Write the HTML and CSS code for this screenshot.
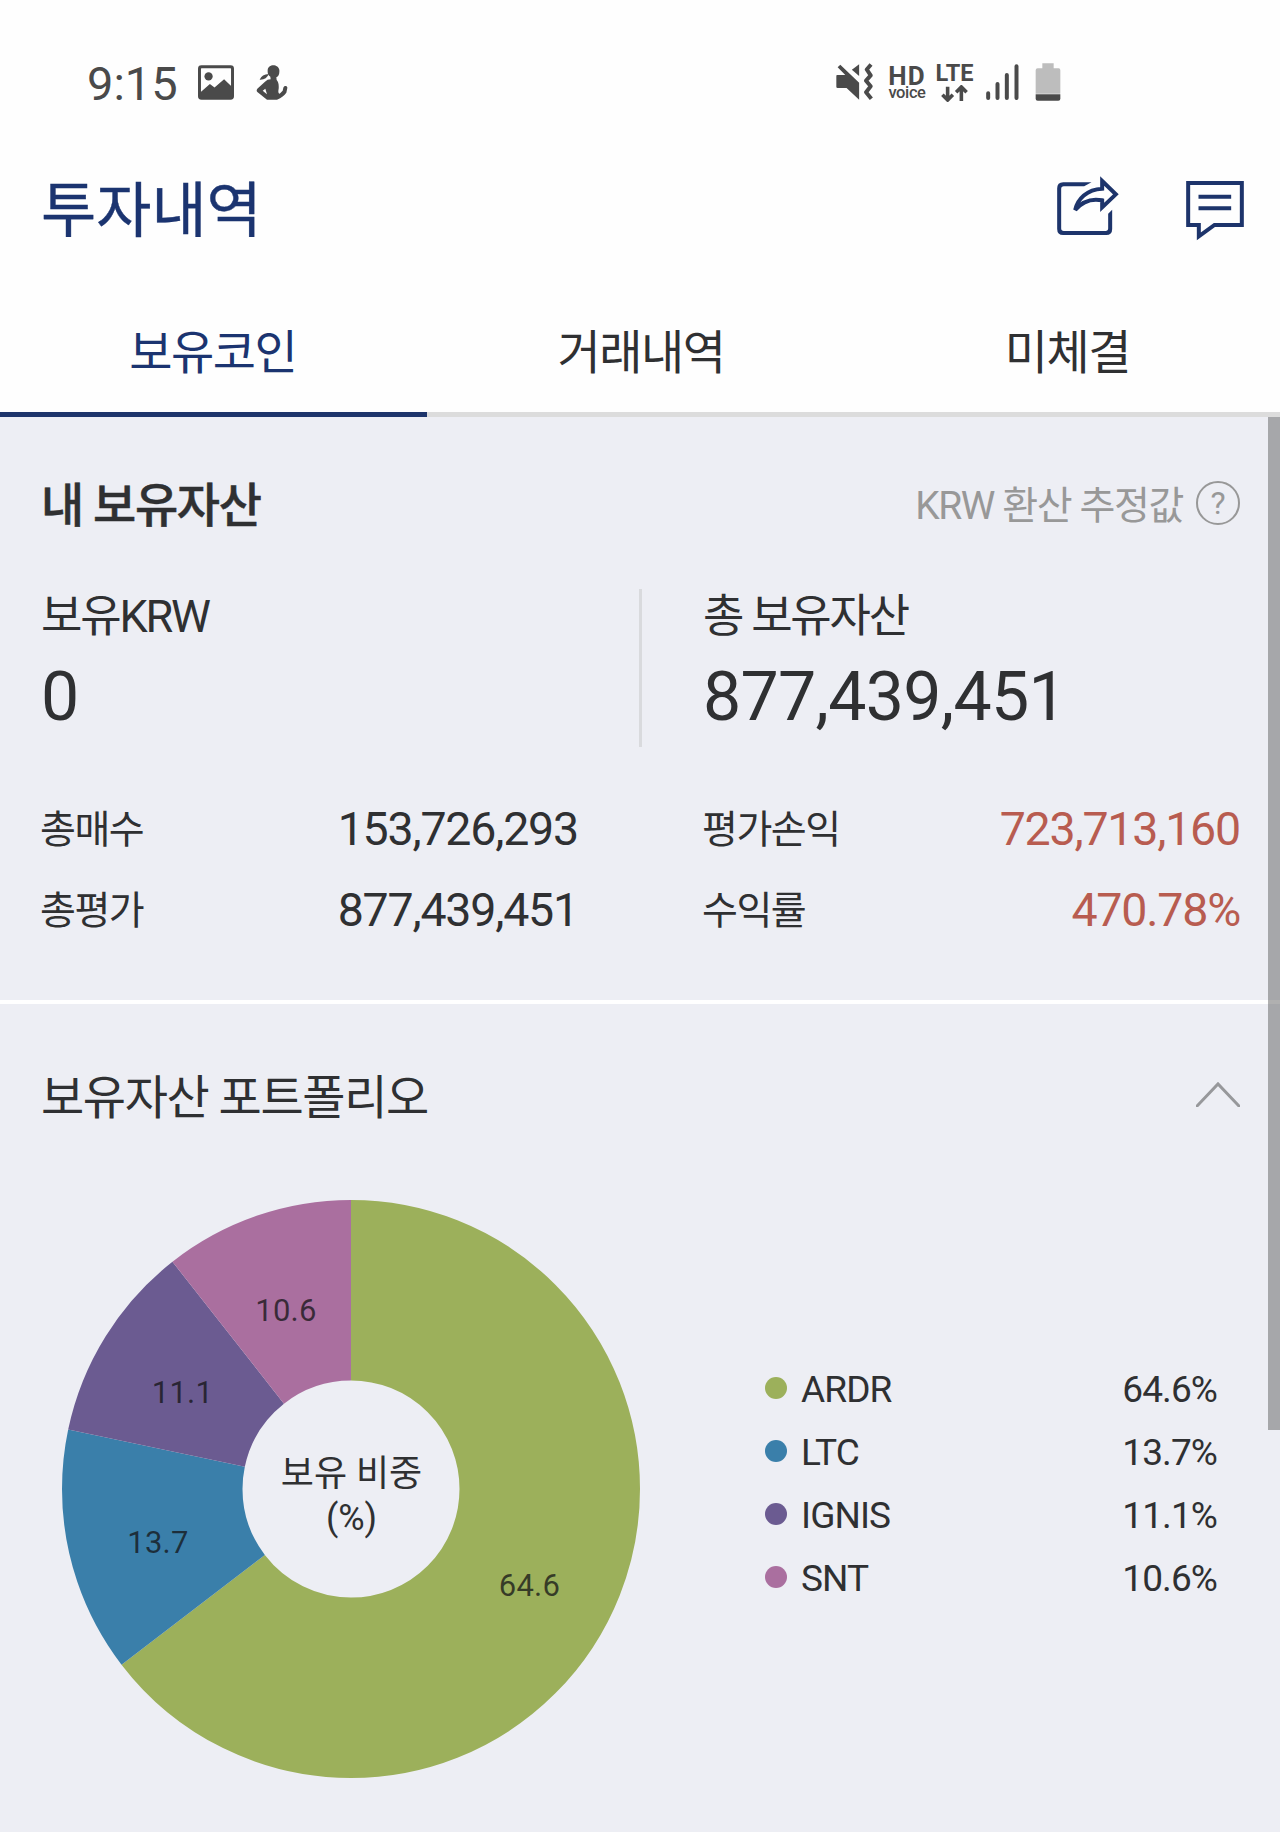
FILE: index.html
```html
<!DOCTYPE html>
<html lang="ko">
<head>
    <meta charset="UTF-8">
    <meta name="viewport" content="width=device-width, initial-scale=1.0">
    <title>투자내역</title>
    <link rel="stylesheet" href="styles.css">
</head>
<body>
    <div class="status-bar">
        <div class="status-left">
            <span class="time">9:15</span>
            <svg class="icon-picture" viewBox="0 0 109 105">
                <rect x="4.5" y="4.5" width="100" height="96" rx="6" fill="none" stroke="#4a4a4a" stroke-width="9"/>
                <circle cx="32" cy="34" r="12.5"/>
                <path d="M5 84L36 57L50 68L79 43L105 68V100H5Z"/>
            </svg>
            <svg class="icon-person" viewBox="0 0 96 105">
                <path d="M35 16C36-4 67-4 70 15C71 26 68 36 61 37L62 45C67 50 69 58 68 71C66 80 67 85 71 86L80 77L82 68C84 60 95 62 94 69L91 83C85 91 77 98 63 104L33 104L4 81Q0 77 4 71L27 50Q34 43 44 43L43 35Q34 31 35 16Z"/>
                <path d="M38 27Q32 45 11 44Q18 28 38 27Z"/>
                <path class="hole" d="M20 77L28 71L33 88Z"/>
            </svg>
        </div>
        <div class="status-right">
            <svg class="icon-mute" viewBox="0 0 112 114">
                <path d="M3 36Q1 36 1 40V71Q1 75 5 75H32L70 111V59L13 5L5 12L28 36Z"/>
                <path d="M70 3V39L48 20Z"/>
                <path d="M106 4L93 19L105 37L91 53L105 70L91 88L107 108" fill="none" stroke="#4a4a4a" stroke-width="12" stroke-linejoin="round"/>
            </svg>
            <div class="hd"><b>HD</b><span>voice</span></div>
            <div class="lte">
                <b>LTE</b>
                <svg viewBox="0 0 82 52">
                    <path d="M20 5V44M4 30L20 46L36 30M62 49V7M46 22L62 6L78 22" fill="none" stroke="#4a4a4a" stroke-width="11"/>
                </svg>
            </div>
            <svg class="icon-signal" viewBox="0 0 98 108">
                <path d="M6 88V102M34 60V102M62 33V102M91 7V102" fill="none" stroke="#4a4a4a" stroke-width="12" stroke-linecap="round"/>
            </svg>
            <svg class="icon-battery" viewBox="0 0 76 114">
                <path fill="#bdbdbd" d="M21 1H55V16H70Q75 16 75 22V92H1V22Q1 16 7 16H21Z"/>
                <path d="M1 94H75V107Q75 113 69 113H7Q1 113 1 107Z"/>
            </svg>
        </div>
    </div>

    <header class="header">
        <h1>투자내역</h1>
        <div class="header-icons">
            <svg class="icon-share" viewBox="0 0 188 180">
                <path d="M106 19H21Q3 19 3 37V159Q3 177 21 177H150Q168 177 168 159V101L156 113V157Q156 165 148 165H23Q15 165 15 157V39Q15 31 23 31H84Z"/>
                <path d="M138 15L179 55L138 94V73C108 67 78 77 57 102C64 70 92 40 138 38Z"/>
            </svg>
            <svg class="icon-chat" viewBox="0 0 173 180">
                <path d="M6 6H167V132H85L38 166V132H6Z"/>
                <path d="M37 47H135M37 82H135"/>
            </svg>
        </div>
    </header>

    <nav class="tabs">
        <a class="tab active">보유코인</a>
        <a class="tab">거래내역</a>
        <a class="tab">미체결</a>
    </nav>

    <main class="content">
        <div class="scrollbar"></div>

        <!-- 내 보유자산 -->
        <section class="assets">
            <div class="section-head">
                <h2 class="bold">내 보유자산</h2>
                <div class="hint">
                    <span>KRW 환산 추정값</span>
                    <i class="help">?</i>
                </div>
            </div>
            <div class="balance">
                <div class="balance-item">
                    <div class="label">보유KRW</div>
                    <div class="amount">0</div>
                </div>
                <div class="balance-item">
                    <div class="label">총 보유자산</div>
                    <div class="amount">877,439,451</div>
                </div>
            </div>
            <div class="stats">
                <div class="stat"><span>총매수</span><em>153,726,293</em></div>
                <div class="stat"><span>평가손익</span><em class="up">723,713,160</em></div>
                <div class="stat"><span>총평가</span><em>877,439,451</em></div>
                <div class="stat"><span>수익률</span><em class="up">470.78%</em></div>
            </div>
        </section>

        <!-- 보유자산 포트폴리오 -->
        <section class="portfolio">
            <div class="section-head">
                <h2>보유자산 포트폴리오</h2>
                <svg class="icon-up" viewBox="0 0 44 26"><path d="M1 25L22 3L43 25"/></svg>
            </div>
            <div class="portfolio-body">
                <svg class="donut" viewBox="0 0 578 578">
                    <g class="slices" transform="rotate(-90 289 289)">
                        <circle class="ardr" cx="289" cy="289" r="198.75" pathLength="100" stroke-dasharray="64.6 35.4"/>
                        <circle class="ltc" cx="289" cy="289" r="198.75" pathLength="100" stroke-dasharray="13.7 86.3" stroke-dashoffset="-64.6"/>
                        <circle class="ignis" cx="289" cy="289" r="198.75" pathLength="100" stroke-dasharray="11.1 88.9" stroke-dashoffset="-78.3"/>
                        <circle class="snt" cx="289" cy="289" r="198.75" pathLength="100" stroke-dasharray="10.6 89.4" stroke-dashoffset="-89.4"/>
                    </g>
                    <g class="slice-labels">
                        <text x="467.5" y="396">64.6</text>
                        <text x="96" y="353">13.7</text>
                        <text x="120.5" y="203">11.1</text>
                        <text x="224" y="121">10.6</text>
                    </g>
                    <g class="donut-title">
                        <text x="289.5" y="286">보유 비중</text>
                        <text x="289.5" y="330">(%)</text>
                    </g>
                </svg>
                <ul class="legend">
                    <li><i class="dot ardr"></i><span>ARDR</span><em>64.6%</em></li>
                    <li><i class="dot ltc"></i><span>LTC</span><em>13.7%</em></li>
                    <li><i class="dot ignis"></i><span>IGNIS</span><em>11.1%</em></li>
                    <li><i class="dot snt"></i><span>SNT</span><em>10.6%</em></li>
                </ul>
            </div>
        </section>
    </main>
</body>
</html>
```
FILE: styles.css
```css
* {
    box-sizing: border-box;
}

body {
    margin: 0;
    width: 1280px;
    height: 1832px;
    overflow: hidden;
    background: #fefefe;
    color: #2f3032;
    font-family: Roboto, "Noto Sans CJK KR", sans-serif;
}

h1, h2, ul {
    margin: 0;
    padding: 0;
    font-weight: 400;
}

em, i {
    font-style: normal;
}

svg {
    display: block;
    flex: none;
}

/* 상태 표시줄 */
.status-bar {
    display: flex;
    justify-content: space-between;
    align-items: center;
    height: 164px;
    padding: 0 219px 0 87px;
    color: #4a4a4a;
    fill: #4a4a4a;
}

.status-left, .status-right {
    display: flex;
    align-items: center;
}

.time {
    width: 111px;
    font-size: 47px;
    line-height: 56px;
    padding-top: 3px;
}

.icon-picture {
    width: 36px;
    height: 35px;
}

.icon-person {
    width: 32px;
    height: 35px;
    margin-left: 22px;
}

.hole {
    fill: #fefefe;
}

.icon-mute {
    width: 37px;
    height: 38px;
    margin-right: 14px;
}

.hd {
    display: flex;
    flex-direction: column;
    align-items: center;
    width: 40px;
    margin-right: 9px;
}

.hd b {
    font-size: 26px;
    letter-spacing: 1px;
    line-height: 20px;
    padding-top: 2px;
}

.hd span {
    font-size: 16.5px;
    font-weight: 500;
    letter-spacing: -0.4px;
    line-height: 14px;
}

.lte {
    display: flex;
    flex-direction: column;
    align-items: center;
    width: 37px;
    margin-right: 13px;
}

.lte b {
    font-size: 23.5px;
    line-height: 21px;
}

.lte svg {
    width: 27px;
    height: 17px;
    margin-top: 1px;
}

.icon-signal {
    width: 33px;
    height: 36px;
    margin-right: 16px;
}

.icon-battery {
    width: 26px;
    height: 38px;
}

/* 헤더 */
.header {
    display: flex;
    justify-content: space-between;
    align-items: center;
    height: 88px;
    margin-bottom: 38px;
    padding: 0 36px 0 41px;
}

.header h1 {
    padding-top: 7px;
    color: #1b3470;
    font-size: 60px;
    line-height: 80px;
    -webkit-text-stroke: 0.4px #1b3470;
}

.header-icons {
    display: flex;
    gap: 67px;
}

.header-icons path {
    fill: none;
    stroke: #1d346b;
    stroke-width: 12;
}

.header-icons .icon-share path:first-child {
    fill: #1d346b;
    stroke: none;
}

.icon-share {
    width: 63px;
    height: 60px;
}

.icon-chat {
    width: 58px;
    height: 60px;
    margin-top: 5px;
}

/* 탭 */
.tabs {
    display: flex;
    height: 127px;
}

.tab {
    flex: 1;
    padding-left: 1px;
    border-bottom: 5px solid #dcdcdc;
    text-align: center;
    font-size: 47px;
    letter-spacing: -1.5px;
    line-height: 125px;
}

.tab.active {
    padding: 0 2px 0 0;
    color: #1b3470;
    border-color: #1d346b;
}

.content {
    position: relative;
    height: 1415px;
    background: #edeef4;
}

.scrollbar {
    position: absolute;
    top: 0;
    right: 0;
    width: 12px;
    height: 1013px;
    background: rgba(80, 80, 80, 0.45);
}

.section-head {
    display: flex;
    justify-content: space-between;
    align-items: center;
    height: 60px;
}

.section-head h2 {
    padding-top: 3px;
    font-size: 47px;
    letter-spacing: -1.4px;
    line-height: 60px;
}

.section-head h2.bold {
    padding-top: 6px;
    font-weight: 500;
    letter-spacing: -1.4px;
    -webkit-text-stroke: 0.5px #2f3032;
}

/* 보유자산 */
.assets {
    height: 587px;
    padding: 56px 40px 0 41px;
    border-bottom: 4px solid #fff;
}

.hint {
    display: flex;
    align-items: center;
    gap: 13px;
    color: #989898;
    font-size: 39px;
    letter-spacing: -1.4px;
}

.hint span {
    padding-bottom: 3px;
}

.help {
    width: 44px;
    height: 44px;
    border: 2.5px solid #989898;
    border-radius: 50%;
    text-align: center;
    font-size: 32px;
    letter-spacing: 0;
    line-height: 40px;
}

.balance {
    display: grid;
    grid-template-columns: 601px 1fr;
    height: 158px;
    margin-top: 56px;
}

.balance-item + .balance-item {
    padding-left: 61px;
}

.balance-item:first-child {
    border-right: 3px solid #d9dadd;
}

.label {
    padding-top: 1px;
    font-size: 45px;
    letter-spacing: -2.2px;
    line-height: 54px;
}

.amount {
    font-size: 68px;
    letter-spacing: -0.7px;
    line-height: 80px;
    margin-top: 13px;
}

.stats {
    display: grid;
    grid-template-columns: 538px 538px;
    justify-content: space-between;
    margin: 41px 0 0 -1px;
}

.stat {
    display: flex;
    justify-content: space-between;
    align-items: center;
    height: 81px;
}

.stat span {
    padding-bottom: 6px;
    font-size: 39px;
    letter-spacing: -1.5px;
}

.stat em {
    font-size: 46.5px;
    letter-spacing: -1.2px;
}

.up {
    color: #b85c50;
}

/* 포트폴리오 */
.portfolio {
    padding: 62px 40px 0 41px;
}

.icon-up {
    width: 44px;
    height: 26px;
    margin-bottom: 5px;
    fill: none;
    stroke: #97989b;
    stroke-width: 3;
    stroke-linecap: round;
}

.portfolio-body {
    display: flex;
    justify-content: space-between;
    align-items: center;
    padding: 74px 22px 0 21px;
}

.donut {
    width: 578px;
    height: 578px;
}

.slices circle {
    fill: none;
    stroke-width: 180.5;
}

.slices .ardr {
    stroke: #9cb05b;
}

.slices .ltc {
    stroke: #3a7faa;
}

.slices .ignis {
    stroke: #6b5b91;
}

.slices .snt {
    stroke: #aa6f9f;
}

.slice-labels, .donut-title {
    text-anchor: middle;
    fill: #2f3032;
}

.slice-labels {
    font-size: 31px;
    letter-spacing: 0.3px;
    fill: rgba(20, 20, 22, 0.75);
}

.donut-title {
    font-size: 36px;
}

.legend {
    width: 453px;
    padding-bottom: 10px;
    list-style: none;
    font-size: 37px;
    letter-spacing: -0.9px;
}

.legend li {
    display: flex;
    align-items: center;
    height: 63px;
}

.legend em {
    margin-left: auto;
    margin-right: 1px;
}

.dot {
    width: 22px;
    height: 22px;
    margin: 0 14px 4px 0;
    border-radius: 50%;
}

.dot.ardr {
    background: #9cb05b;
}

.dot.ltc {
    background: #3a7faa;
}

.dot.ignis {
    background: #6b5b91;
}

.dot.snt {
    background: #aa6f9f;
}
```
